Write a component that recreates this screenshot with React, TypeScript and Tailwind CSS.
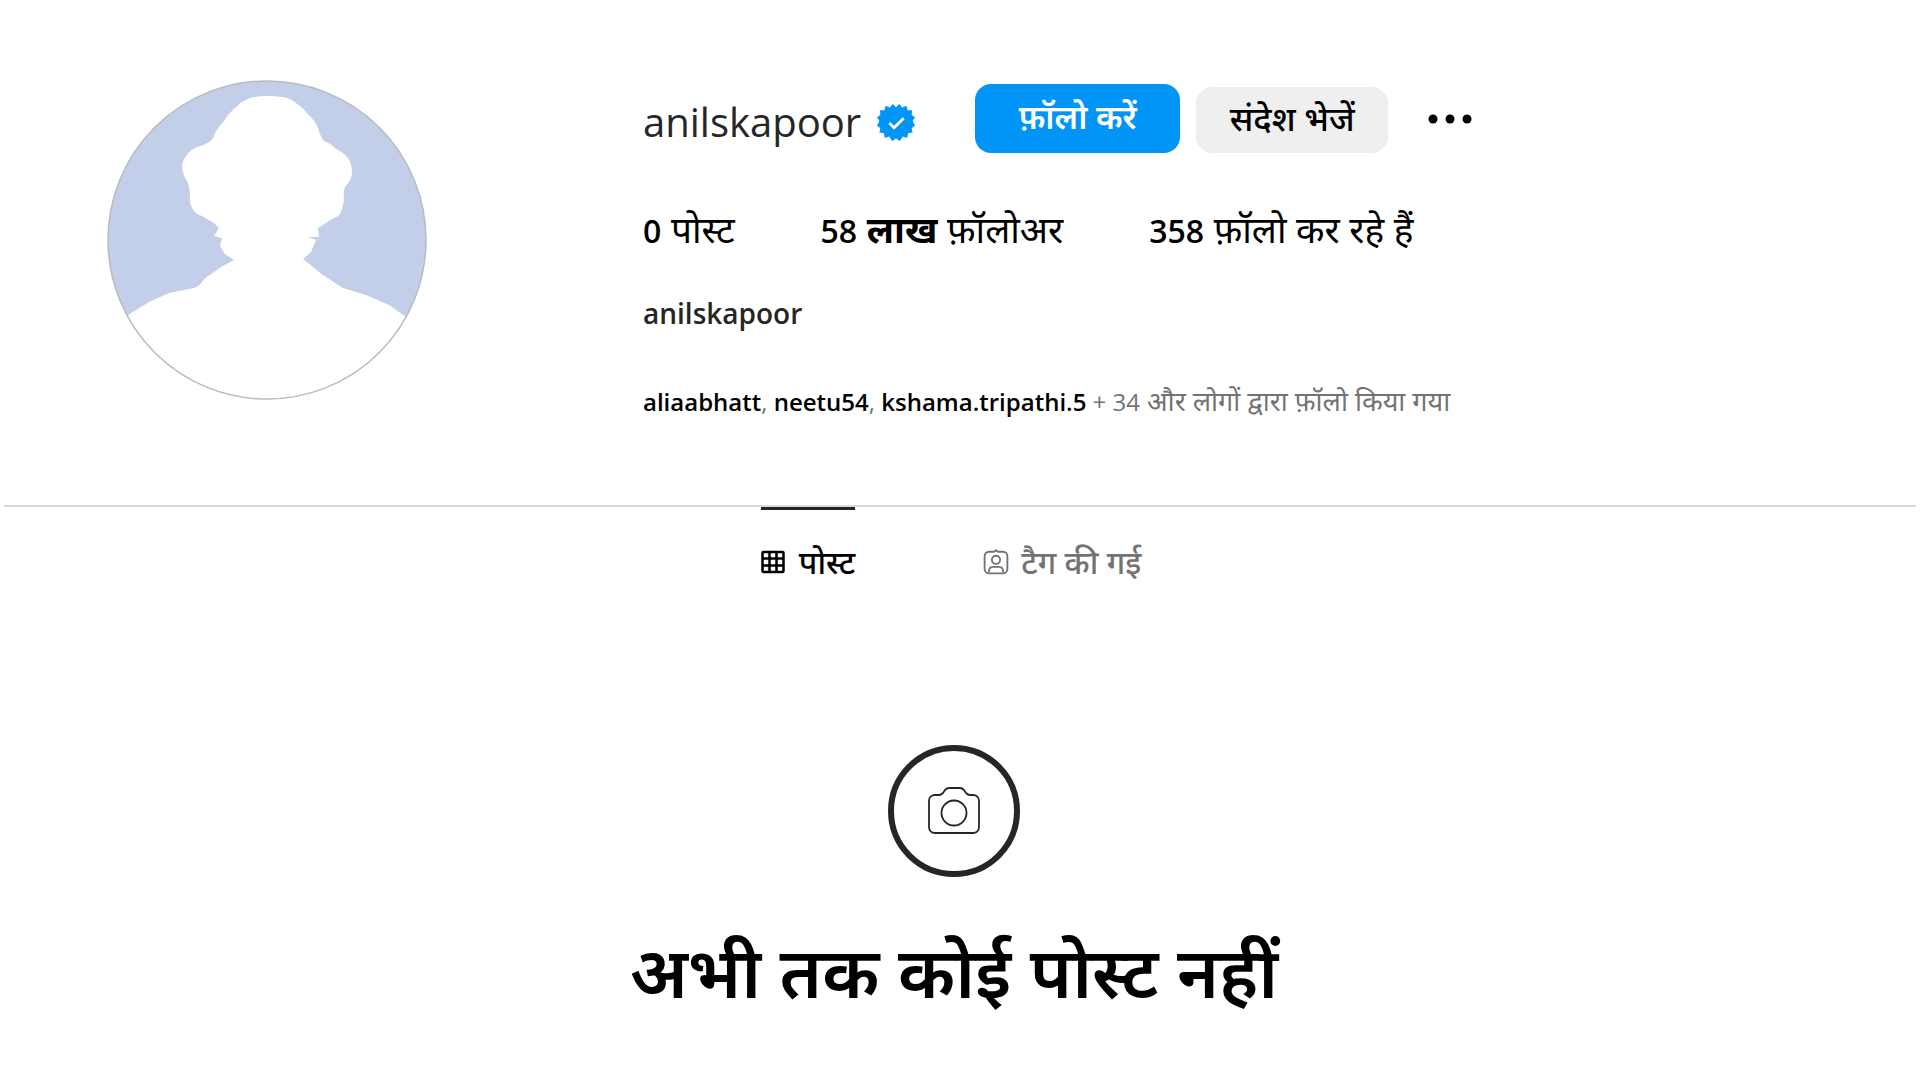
import type { FC } from "react";

type StatProps = {
  count: string;
  unit?: string;
  label: string;
};

const VerifiedIcon: FC = () => (
  <svg viewBox="0 0 40 40" className="w-[38px] h-[38px] shrink-0" role="img" aria-label="सत्यापित">
    <path
      fill="#0095f6"
      d="M20 3.500 16.500 0l-3 3.800L9 1.800 7.800 6.500 3 6.700l.5 5L0 14l2.500 4L0 22.500l3.500 3L2.500 30l4.800.8.8 4.900 4.800-1.400 3 4.700 4.100-2.800 4.100 2.800 3-4.700 4.800 1.400.8-4.900 4.800-.8-1-4.500 3.500-3-2.500-4.500 2.500-4-3.500-2.300.5-5-4.800-.2L31 1.800l-4.500 2-3-3.800z"
    />
    <path d="m13 20 5 5 10-10" fill="none" stroke="#fff" strokeWidth="3" />
  </svg>
);

const Avatar: FC = () => (
  <svg viewBox="0 0 320 320" className="size-80 shrink-0" role="img" aria-label="anilskapoor">
    <defs>
      <clipPath id="avatar-clip">
        <circle cx="160" cy="160" r="159" />
      </clipPath>
    </defs>
    <circle cx="160" cy="160" r="159" fill="#c3cee8" />
    <g clipPath="url(#avatar-clip)">
      <path
        fill="#fff"
        d="M160 16Q149 16 143 18 135 21 130 26 121 34 117 41 111 47 108 53 106 60 102 62 96 66 90 67 83 70 80 75 75 81 75 87 76 96 80 101 83 107 83 114 82 122 85 128 88 134 95 136L107 143 112 148 107 156 115 158 113 166 118 174 127 180 114 187 97 199Q93 206 87 208L62 213 42 222 21 235V320H299V237L282 225 259 215 236 208 216 195 196 179 204 172 209 160 201 157 212 157 211 148 227 138Q233 136 234 132 236 126 237 120 236 112 238 107 245 100 245 92 245 84 241 78 236 72 229 69 222 62 217 61 213 56 211 48 208 41 201 34 195 27 189 23 183 18 176 17 168 16 160 16z"
      />
    </g>
    <circle cx="160" cy="160" r="159" fill="none" stroke="#b9bac2" strokeWidth="1.5" />
  </svg>
);

const GridIcon: FC = () => (
  <svg viewBox="0 0 24 24" className="size-6 shrink-0" fill="none" stroke="currentColor" strokeWidth="2.500" aria-hidden="true">
    <rect x="1.5" y="2" width="21" height="20" rx="1" />
    <path d="M8.500 2v20M15.500 2v20M2 8.500h20M2 15.500h20" />
  </svg>
);

const TaggedIcon: FC = () => (
  <svg viewBox="0 0 24 24" className="w-[26px] h-[26px] shrink-0" fill="none" stroke="currentColor" strokeWidth="1.700" strokeLinejoin="round" aria-hidden="true">
    <path d="M10.200 2.500 12 1l1.800 1.500H18.500A4 4 0 0 1 22.500 6.500v12a4 4 0 0 1-4 4h-13a4 4 0 0 1-4-4v-12a4 4 0 0 1 4-4z" />
    <circle cx="12" cy="10" r="3.800" />
    <path d="M5.500 21.500c0-3.500 1.500-5 3.500-5h6c2 0 3.500 1.500 3.500 5" />
  </svg>
);

const CameraIcon: FC = () => (
  <svg viewBox="0 0 52 48" className="w-[52px] h-12" fill="none" stroke="#262626" strokeWidth="1.800" aria-hidden="true">
    <path d="M7 8h4c2 0 3-1 4-2l2-3c1-1 2-2 4-2h11c2 0 3 1 4 2l2 3c1 1 2 2 4 2h3c4 0 6 3 6 6v26c0 4-3 6-6 6H7c-4 0-6-3-6-6V14c0-4 3-6 6-6z" />
    <circle cx="26" cy="26" r="12.500" />
  </svg>
);

const Stat: FC<StatProps> = ({ count, unit, label }) => (
  <li>
    <span className="text-[32px] font-semibold">{count}</span> {unit && <span className="font-bold">{unit} </span>}
    {label}
  </li>
);

const App: FC = () => {
  return (
    <div className="min-h-screen bg-white text-black font-['Open_Sans','Noto_Sans',sans-serif]">
      <header className="flex gap-[216px] pl-[107px] pr-8 pt-20">
        <Avatar />
        <section>
          <div className="flex items-start">
            <h2 className="mt-[14px] text-[40px] leading-[56px] text-[#262626]">anilskapoor</h2>
            <span className="ml-4 mt-6">
              <VerifiedIcon />
            </span>
            <button className="ml-[60px] mt-1 w-[205px] h-[69px] pb-1 rounded-2xl bg-[#0095f6] text-white text-[33px] leading-[48px] font-semibold">
              फ़ॉलो करें
            </button>
            <button className="ml-4 mt-[7px] w-48 h-[66px] pb-1 rounded-2xl bg-[#efefef] text-[34px] leading-[48px] font-medium">
              संदेश भेजें
            </button>
            <button aria-label="विकल्प" className="ml-10 mt-[33px]">
              <svg viewBox="0 0 44 12" className="w-11 h-3">
                <circle cx="5" cy="6" r="4.500" />
                <circle cx="22" cy="6" r="4.500" />
                <circle cx="39" cy="6" r="4.500" />
              </svg>
            </button>
          </div>
          <ul className="flex gap-[86px] mt-[52px] text-[37px] leading-[48px]">
            <Stat count="0" label="पोस्ट" />
            <Stat count="58" unit="लाख" label="फ़ॉलोअर" />
            <Stat count="358" label="फ़ॉलो कर रहे हैं" />
          </ul>
          <h1 className="mt-[38px] text-[28px] leading-10 font-semibold text-[#262626]">anilskapoor</h1>
          <p className="mt-12 text-[27px] leading-10 text-[#737373]">
            <span className="text-2xl">
              <a href="#aliaabhatt" className="font-semibold text-black">aliaabhatt</a>,{" "}
              <a href="#neetu54" className="font-semibold text-black">neetu54</a>,{" "}
              <a href="#kshama" className="font-semibold text-black">kshama.tripathi.5</a> + 34
            </span>{" "}
            और लोगों द्वारा फ़ॉलो किया गया
          </p>
        </section>
      </header>

      <nav className="mt-[84px] mx-1 flex justify-center gap-32 border-t-2 border-[#d8dbda] pr-[18px] text-[32px] leading-10 font-medium">
        <a href="#posts" className="flex items-center gap-[14px] border-t-3 border-[#262626] pt-8">
          <GridIcon />
          पोस्ट
        </a>
        <a href="#tagged" className="flex items-center gap-3 border-t-3 border-transparent pt-8 text-[#737373]">
          <TaggedIcon />
          टैग की गई
        </a>
      </nav>

      <main className="flex flex-col items-center pt-[163px] pr-3">
        <div className="flex size-[132px] items-center justify-center rounded-full border-6 border-[#262626]">
          <CameraIcon />
        </div>
        <h2 className="mt-[46px] text-[71px] leading-[96px] font-semibold">अभी तक कोई पोस्ट नहीं</h2>
      </main>
    </div>
  );
};

export default App;
